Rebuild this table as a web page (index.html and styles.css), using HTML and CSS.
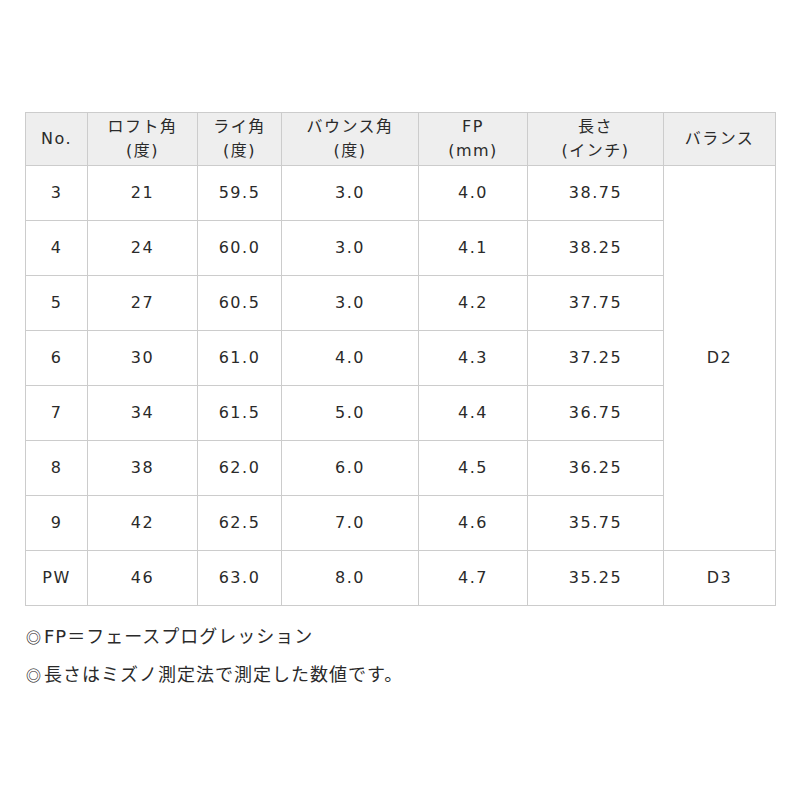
FILE: index.html
```html
<!DOCTYPE html>
<html lang="ja">
<head>
<meta charset="utf-8">
<link rel="stylesheet" href="styles.css">
</head>
<body>
<div class="page">
  <table class="spec">
    <colgroup>
      <col class="c1"><col class="c2"><col class="c3"><col class="c4"><col class="c5"><col class="c6"><col class="c7">
    </colgroup>
    <thead>
      <tr>
        <th>No.</th>
        <th>ロフト角<br>(度)</th>
        <th>ライ角<br>(度)</th>
        <th>バウンス角<br>(度)</th>
        <th>FP<br>(mm)</th>
        <th>長さ<br>(インチ)</th>
        <th>バランス</th>
      </tr>
    </thead>
    <tbody>
      <tr><td>3</td><td>21</td><td>59.5</td><td>3.0</td><td>4.0</td><td>38.75</td><td rowspan="7">D2</td></tr>
      <tr><td>4</td><td>24</td><td>60.0</td><td>3.0</td><td>4.1</td><td>38.25</td></tr>
      <tr><td>5</td><td>27</td><td>60.5</td><td>3.0</td><td>4.2</td><td>37.75</td></tr>
      <tr><td>6</td><td>30</td><td>61.0</td><td>4.0</td><td>4.3</td><td>37.25</td></tr>
      <tr><td>7</td><td>34</td><td>61.5</td><td>5.0</td><td>4.4</td><td>36.75</td></tr>
      <tr><td>8</td><td>38</td><td>62.0</td><td>6.0</td><td>4.5</td><td>36.25</td></tr>
      <tr><td>9</td><td>42</td><td>62.5</td><td>7.0</td><td>4.6</td><td>35.75</td></tr>
      <tr><td>PW</td><td>46</td><td>63.0</td><td>8.0</td><td>4.7</td><td>35.25</td><td>D3</td></tr>
    </tbody>
  </table>
  <div class="notes">
    <p><span class="mark">◎</span>FP＝フェースプログレッション</p>
    <p><span class="mark">◎</span>長さはミズノ測定法で測定した数値です。</p>
  </div>
</div>
</body>
</html>
```

FILE: styles.css
```css
html, body {
  margin: 0;
  padding: 0;
  background: #ffffff;
}
body {
  font-family: "DejaVu Sans", "Noto Sans CJK JP", sans-serif;
  color: #2a2a2a;
  font-size: 16px;
}
.page {
  padding: 112px 25px 0 25px;
}
.spec {
  border-collapse: collapse;
  width: 750px;
  table-layout: fixed;
  letter-spacing: 1.5px;
}
.c1 { width: 62px; }
.c2 { width: 110px; }
.c3 { width: 84px; }
.c4 { width: 137px; }
.c5 { width: 109px; }
.c6 { width: 136px; }
.c7 { width: 112px; }
.spec th, .spec td {
  border: 1px solid #cccccc;
  text-align: center;
  vertical-align: middle;
  padding: 0;
  font-weight: normal;
}
.spec th {
  background: #eeeeee;
  height: 52px;
  line-height: 24px;
  font-size: 16px;
}
.spec td {
  height: 54px;
  line-height: 20px;
}
.notes {
  padding-top: 18px;
  font-size: 18px;
  letter-spacing: 1px;
}
.notes p {
  margin: 0;
  height: 38px;
  line-height: 26px;
}
.mark {
  display: inline-block;
  width: 19px;
  font-family: "Noto Sans CJK JP", sans-serif;
  font-size: 15px;
  font-weight: 500;
  color: #222222;
  letter-spacing: 0;
  text-align: left;
  padding-left: 1px;
  box-sizing: border-box;
}
```
